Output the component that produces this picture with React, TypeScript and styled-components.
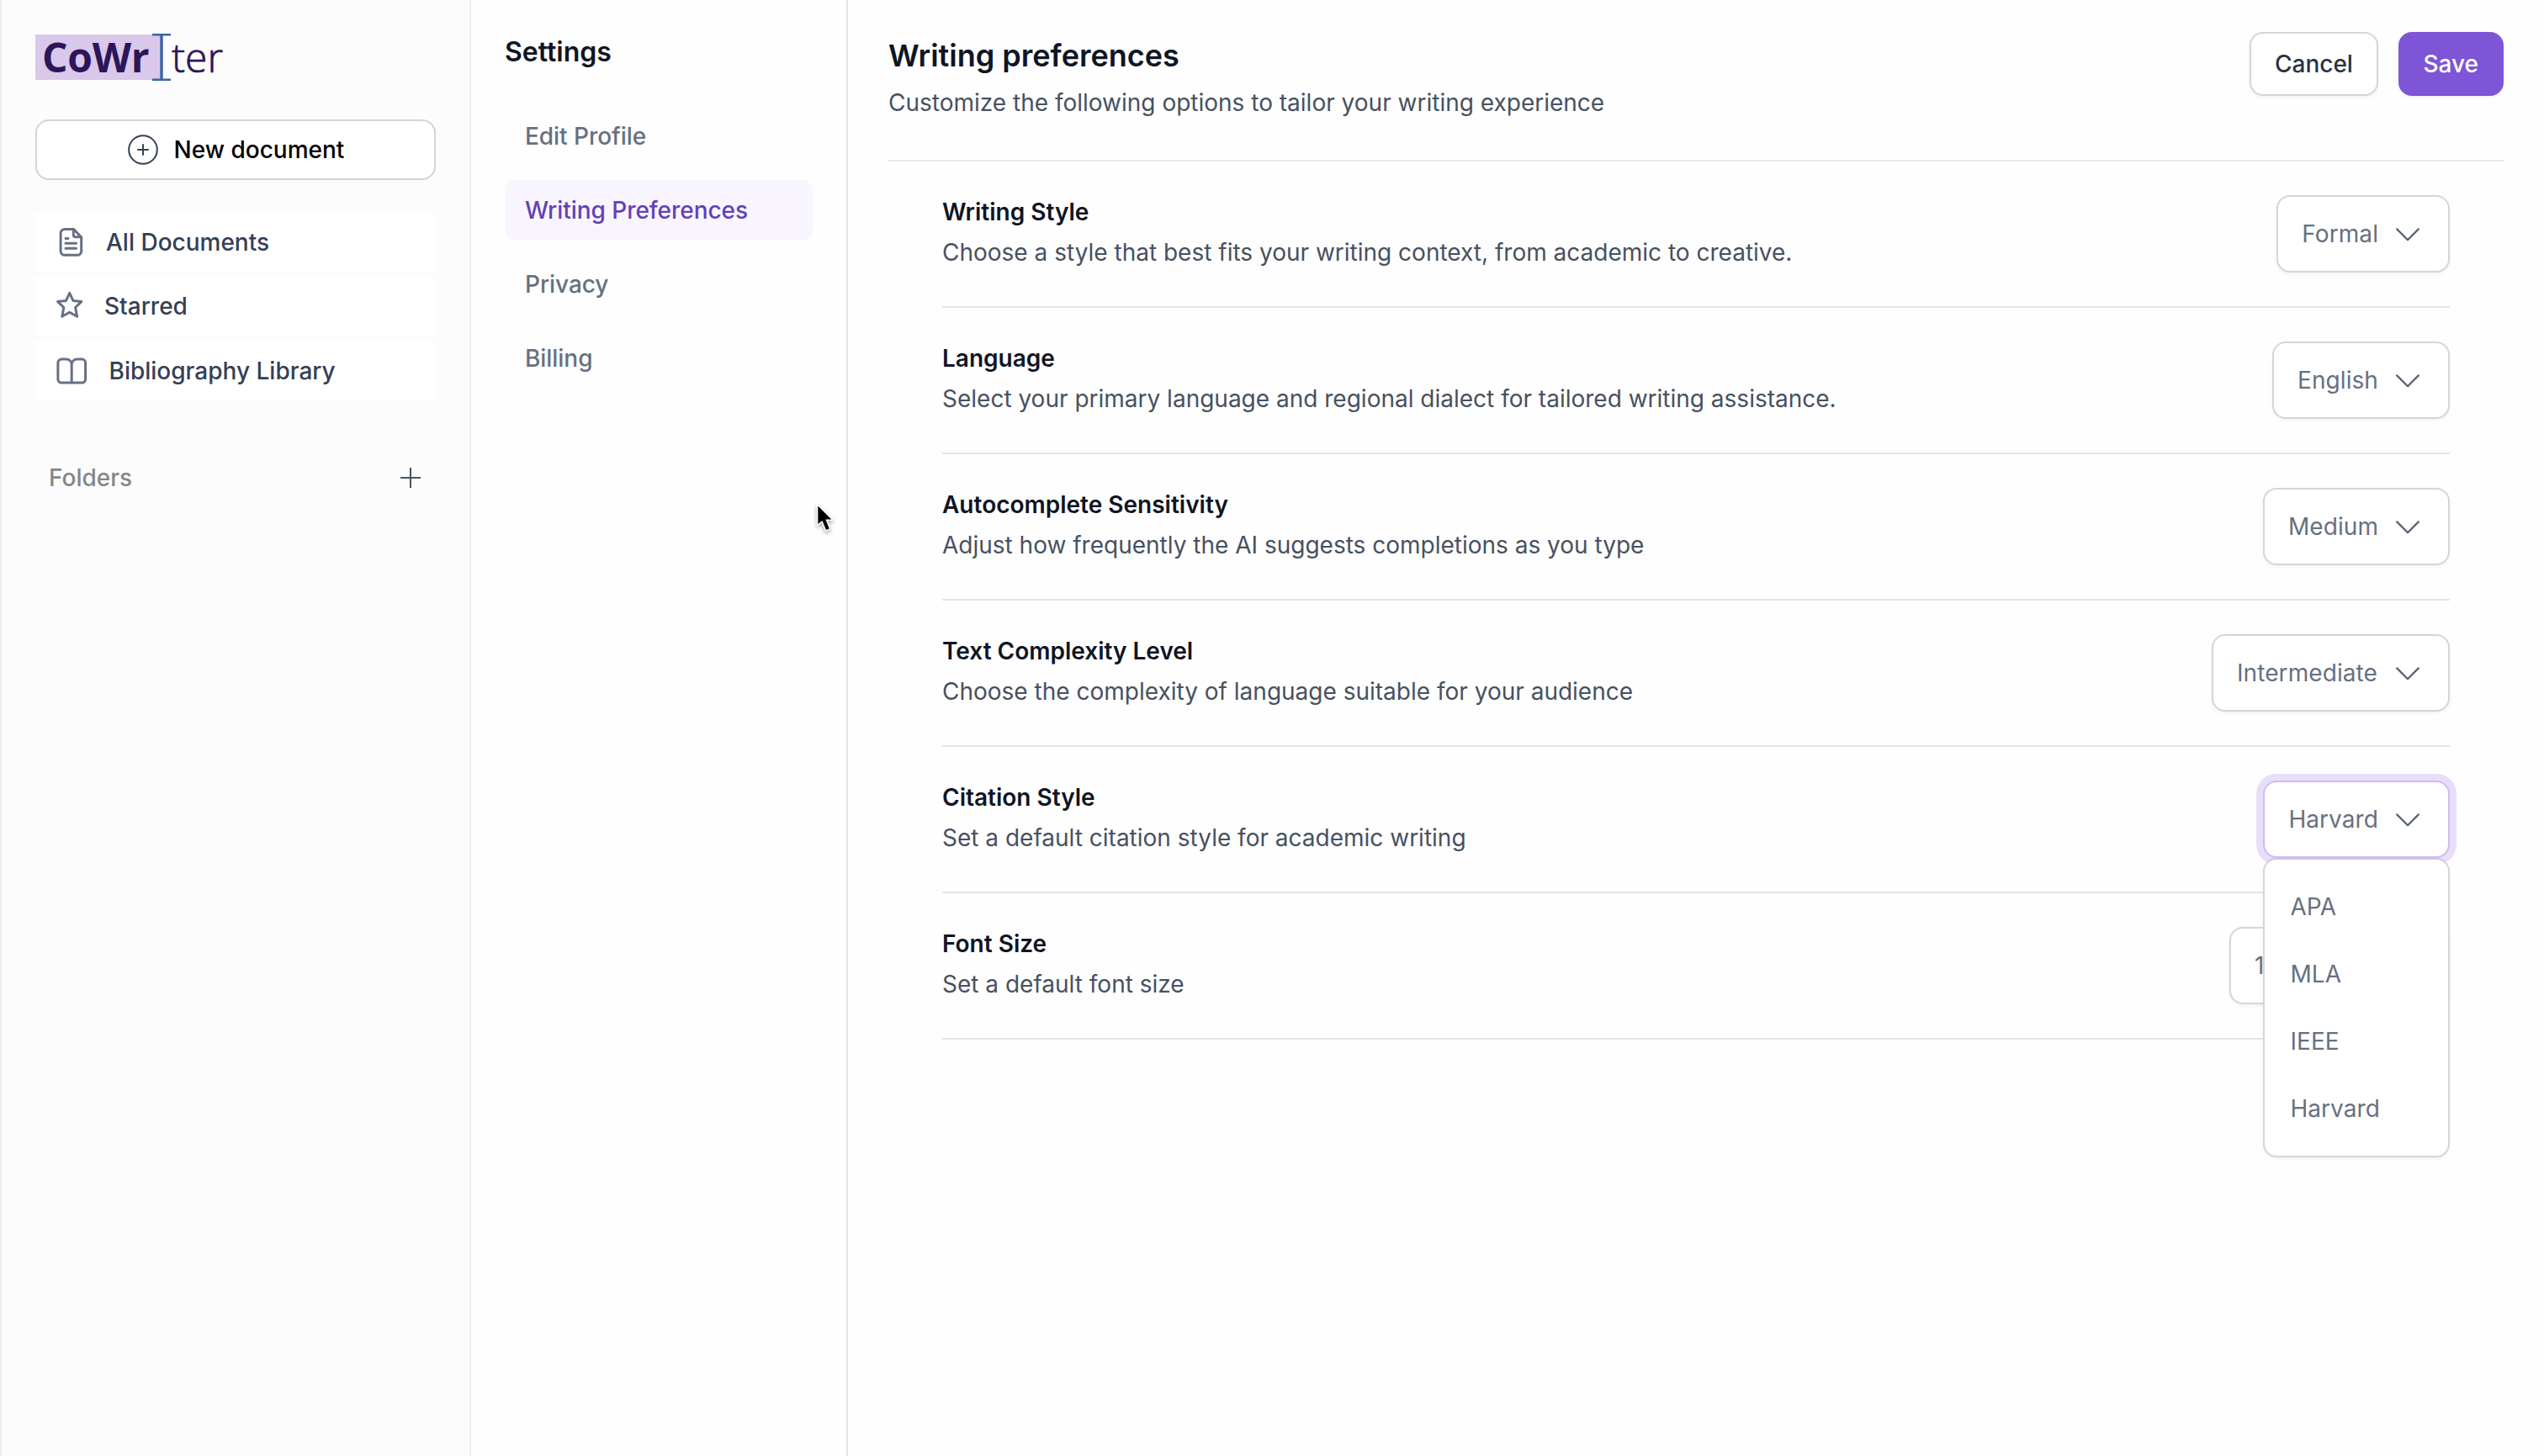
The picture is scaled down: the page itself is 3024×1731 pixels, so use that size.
import React from "react";
import styled, { createGlobalStyle, css } from "styled-components";

const GlobalStyle = createGlobalStyle`
  *, *::before, *::after { box-sizing: border-box; }
  body {
    margin: 0;
    background: #fefefe;
    font-family: Inter, "Liberation Sans", sans-serif;
    font-size: 28px;
    line-height: 40px;
    color: #0f1524;
  }
  h1, h2, h3, p, ul { margin: 0; padding: 0; }
  button { font: inherit; cursor: pointer; }
`;

const Page = styled.div`
  display: flex;
  height: 1731px;
  overflow: hidden;
`;

/* ---------- Sidebar ---------- */

const Sidebar = styled.aside`
  flex: none;
  width: 560px;
  padding: 40px 40px 0;
  background: #fcfcfc;
  border-left: 2px solid #efeff0;
  border-right: 2px solid #eeeef0;
`;

const Logo = styled.div`
  display: flex;
  align-items: center;
  height: 56px;
  font-family: "Open Sans", "Noto Sans", sans-serif;
  font-size: 48px;
  line-height: 54px;
  color: #2c1659;
`;

const LogoMark = styled.span`
  width: 150px;
  height: 54px;
  padding-left: 8px;
  font-weight: 700;
  line-height: 53px;
  letter-spacing: -0.3px;
  background: #d9c8ea;
`;

const LogoRest = styled.span`
  height: 54px;
  font-weight: 300;
  line-height: 53px;
  -webkit-text-stroke: 0.7px #2c1659;
`;

const LogoBeam = styled.svg`
  flex: none;
  width: 22px;
  height: 56px;
  margin-left: -11px;
  margin-right: 1px;
`;

const NewDocButton = styled.button`
  display: flex;
  align-items: center;
  justify-content: center;
  gap: 19px;
  width: 476px;
  height: 72px;
  margin-top: 46px;
  padding: 0 0 0 1px;
  font-weight: 500;
  color: #000;
  background: #fff;
  border: 2px solid #d3d4d9;
  border-radius: 16px;
`;

const SideNav = styled.nav`
  display: flex;
  flex-direction: column;
  gap: 6px;
  width: 476px;
  margin-top: 39px;
`;

const SideLink = styled.a`
  display: flex;
  align-items: center;
  gap: 24px;
  height: 70px;
  padding-left: 24px;
  font-weight: 500;
  color: #344054;
  background: #fff;

  &:last-child {
    height: 71px;
    padding-top: 1px;
  }
`;

const FoldersRow = styled.div`
  display: flex;
  align-items: center;
  justify-content: space-between;
  margin-top: 72px;
  padding: 0 18px 0 16px;
  font-weight: 500;
  color: #868686;
`;

/* ---------- Settings navigation ---------- */

const SettingsPanel = styled.section`
  flex: none;
  width: 448px;
  padding: 38px 40px 0;
  border-right: 2px solid #e4e4e6;
`;

const PanelTitle = styled.h2`
  font-size: 32px;
  font-weight: 600;
  line-height: 48px;
`;

const SettingsNav = styled.nav`
  display: flex;
  flex-direction: column;
  gap: 16px;
  margin-top: 40px;
`;

const SettingsLink = styled.a<{ $active: boolean }>`
  padding: 16px 24px;
  font-weight: 500;
  letter-spacing: -0.05px;
  border-radius: 12px;
  color: ${(p) => (p.$active ? "#6440b8" : "#667080")};
  background: ${(p) => (p.$active ? "#f8f5fe" : "transparent")};
`;

/* ---------- Main content ---------- */

const Main = styled.main`
  flex: 1;
  padding: 38px 48px 0;
`;

const Header = styled.header`
  display: flex;
  align-items: flex-start;
  justify-content: space-between;
  padding-bottom: 48px;
  border-bottom: 2px solid #e9e9eb;
`;

const HeaderText = styled.div`
  display: flex;
  flex-direction: column;
  gap: 8px;
`;

const Title = styled.h1`
  font-size: 36px;
  font-weight: 600;
  line-height: 56px;
`;

const Description = styled.p`
  color: #475160;
`;

const Actions = styled.div`
  display: flex;
  gap: 24px;
`;

const Button = styled.button<{ $primary?: boolean }>`
  height: 76px;
  padding: 0 28px 0 27.5px;
  border: 2px solid #d5d5d9;
  border-radius: 16px;
  font-weight: 500;
  color: #2a3342;
  background: #fff;
  box-shadow: 0 2px 4px rgba(16, 24, 40, 0.05);
  ${(p) =>
    p.$primary &&
    css`
      color: #fff;
      background: #7e55d6;
      border-color: #7e55d6;
    `}
`;

const Preferences = styled.div`
  padding: 0 64px;
`;

const Preference = styled.div`
  display: flex;
  align-items: flex-start;
  justify-content: space-between;
  height: 174px;
  padding-top: 40px;
  border-bottom: 2px solid #e4e4e6;
`;

const PreferenceText = styled.div`
  display: flex;
  flex-direction: column;
  gap: 8px;
`;

const PreferenceTitle = styled.h3`
  font-size: 28px;
  font-weight: 600;
  line-height: 40px;
`;

const SelectWrap = styled.div`
  position: relative;
`;

const SelectButton = styled.button<{ $open: boolean; $minWidth?: number }>`
  display: flex;
  align-items: center;
  justify-content: space-between;
  gap: 17px;
  height: 92px;
  min-width: ${(p) => p.$minWidth ?? 0}px;
  padding: 0 30px 0 28px;
  letter-spacing: 0.08px;
  color: #667080;
  background: #fff;
  border: 2px solid ${(p) => (p.$open ? "#d1b9f1" : "#d5d5d9")};
  border-radius: 16px;
  box-shadow: ${(p) =>
    p.$open ? "0 0 0 8px #e8defa" : "0 2px 4px rgba(16, 24, 40, 0.05)"};
`;

const Menu = styled.div`
  position: absolute;
  z-index: 2;
  top: 100%;
  left: 0;
  right: 0;
  padding: 16px 0;
  background: #fff;
  border: 2px solid #d5d5d9;
  border-top-color: #cfc6e2;
  border-radius: 16px;
  box-shadow: 0 2px 4px rgba(16, 24, 40, 0.05);
`;

const MenuItem = styled.div`
  padding: 20px 30px;
  letter-spacing: 0.08px;
  color: #667080;
`;

const Cursor = styled.svg`
  position: absolute;
  left: 970px;
  top: 598px;
  filter: drop-shadow(0 2px 2px rgba(0, 0, 0, 0.35));
`;

/* ---------- Icons ---------- */

const sideStroke = {
  fill: "none",
  stroke: "#667085",
  strokeWidth: 3,
  strokeLinecap: "round" as const,
  strokeLinejoin: "round" as const,
};

const FileIcon = () => (
  <svg width="36" height="36" viewBox="0 0 36 36" {...sideStroke}>
    <path d="M21.5 2.4H11a4.9 4.9 0 0 0-4.9 4.9v21.1a4.9 4.9 0 0 0 4.9 4.9h14.8a4.9 4.9 0 0 0 4.9-4.9V12z" />
    <path d="M21.3 2.6v6.6a2.6 2.6 0 0 0 2.6 2.6h6.6" />
    <path d="M12 13.4h3M12 19.2h12.5M12 25.2h12.5" />
  </svg>
);

const StarIcon = () => (
  <svg width="34" height="36" viewBox="0 0 34 36" {...sideStroke}>
    <path d="M16.7 2.4L20.9 11.4L30.8 12.6L23.6 19.5L25.6 30.2L16.7 25.2L7.8 30.2L9.8 19.5L2.6 12.6L12.5 11.4Z" />
  </svg>
);

const BookIcon = () => (
  <svg width="39.5" height="36" viewBox="0 0 39.5 36" {...sideStroke}>
    <path d="M19.2 10.2C19.2 6.6 16.2 4 12.6 4H7.2A4.3 4.3 0 0 0 2.9 8.3V27.8A4.3 4.3 0 0 0 7.2 32.1H31.3A4.3 4.3 0 0 0 35.6 27.8V8.3A4.3 4.3 0 0 0 31.3 4H25.8C22.2 4 19.2 6.6 19.2 10.2ZM19.2 10.2V32" />
  </svg>
);

const PlusCircleIcon = () => (
  <svg width="36" height="36" viewBox="0 0 36 36" fill="none" stroke="#344054" strokeWidth="2">
    <circle cx="18" cy="18" r="16.8" />
    <path d="M11.2 18h13.6M18 11.2v13.6" />
  </svg>
);

const PlusIcon = () => (
  <svg width="24" height="24" viewBox="0 0 24 24" fill="none" stroke="#475467" strokeWidth="2">
    <path d="M0 12h24M12 0v24" />
  </svg>
);

const ChevronIcon = () => (
  <svg width="36" height="36" viewBox="0 0 36 36" fill="none" stroke="#596275" strokeWidth="2.3" strokeLinecap="round" strokeLinejoin="round">
    <path d="M5.2 12.4L18 25.2L30.8 12.4" />
  </svg>
);

/* ---------- Data ---------- */

const sideLinks = [
  { label: "All Documents", Icon: FileIcon },
  { label: "Starred", Icon: StarIcon },
  { label: "Bibliography Library", Icon: BookIcon },
];

const settingsLinks = ["Edit Profile", "Writing Preferences", "Privacy", "Billing"];

type Pref = {
  title: string;
  text: string;
  value: string;
  minWidth?: number;
  options?: string[];
};

const preferences: Pref[] = [
  { title: "Writing Style", text: "Choose a style that best fits your writing context, from academic to creative.", value: "Formal" },
  { title: "Language", text: "Select your primary language and regional dialect for tailored writing assistance.", value: "English" },
  { title: "Autocomplete Sensitivity", text: "Adjust how frequently the AI suggests completions as you type", value: "Medium" },
  { title: "Text Complexity Level", text: "Choose the complexity of language suitable for your audience", value: "Intermediate", minWidth: 283 },
  { title: "Citation Style", text: "Set a default citation style for academic writing", value: "Harvard", options: ["APA", "MLA", "IEEE", "Harvard"] },
  { title: "Font Size", text: "Set a default font size", value: "1", minWidth: 262 },
];

export default function App() {
  return (
    <>
      <GlobalStyle />
      <Page>
        <Sidebar>
          <Logo>
            <LogoMark>CoWr</LogoMark>
            <LogoBeam viewBox="0 0 22 56" fill="#3b64a8">
              <path d="M0 0H22V2.4H12.7V53.6H22V56H0V53.6H9.3V2.4H0Z" />
            </LogoBeam>
            <LogoRest>ter</LogoRest>
          </Logo>
          <NewDocButton>
            <PlusCircleIcon />
            New document
          </NewDocButton>
          <SideNav>
            {sideLinks.map(({ label, Icon }) => (
              <SideLink key={label}>
                <Icon />
                {label}
              </SideLink>
            ))}
          </SideNav>
          <FoldersRow>
            Folders
            <PlusIcon />
          </FoldersRow>
        </Sidebar>

        <SettingsPanel>
          <PanelTitle>Settings</PanelTitle>
          <SettingsNav>
            {settingsLinks.map((label) => (
              <SettingsLink key={label} $active={label === "Writing Preferences"}>
                {label}
              </SettingsLink>
            ))}
          </SettingsNav>
        </SettingsPanel>

        <Main>
          <Header>
            <HeaderText>
              <Title>Writing preferences</Title>
              <Description>Customize the following options to tailor your writing experience</Description>
            </HeaderText>
            <Actions>
              <Button>Cancel</Button>
              <Button $primary>Save</Button>
            </Actions>
          </Header>
          <Preferences>
            {preferences.map((pref) => (
              <Preference key={pref.title}>
                <PreferenceText>
                  <PreferenceTitle>{pref.title}</PreferenceTitle>
                  <Description>{pref.text}</Description>
                </PreferenceText>
                <SelectWrap>
                  <SelectButton $open={Boolean(pref.options)} $minWidth={pref.minWidth}>
                    {pref.value}
                    <ChevronIcon />
                  </SelectButton>
                  {pref.options && (
                    <Menu>
                      {pref.options.map((option) => (
                        <MenuItem key={option}>{option}</MenuItem>
                      ))}
                    </Menu>
                  )}
                </SelectWrap>
              </Preference>
            ))}
          </Preferences>
        </Main>
      </Page>
      <Cursor width="26" height="40" viewBox="0 0 26 40">
        <path
          d="M2.3 3.6V25L7.4 20.9L12 32L15.8 30.4L11.4 19.6H18.4Z"
          fill="#000"
          stroke="#fff"
          strokeWidth="3"
          paintOrder="stroke"
        />
      </Cursor>
    </>
  );
}
